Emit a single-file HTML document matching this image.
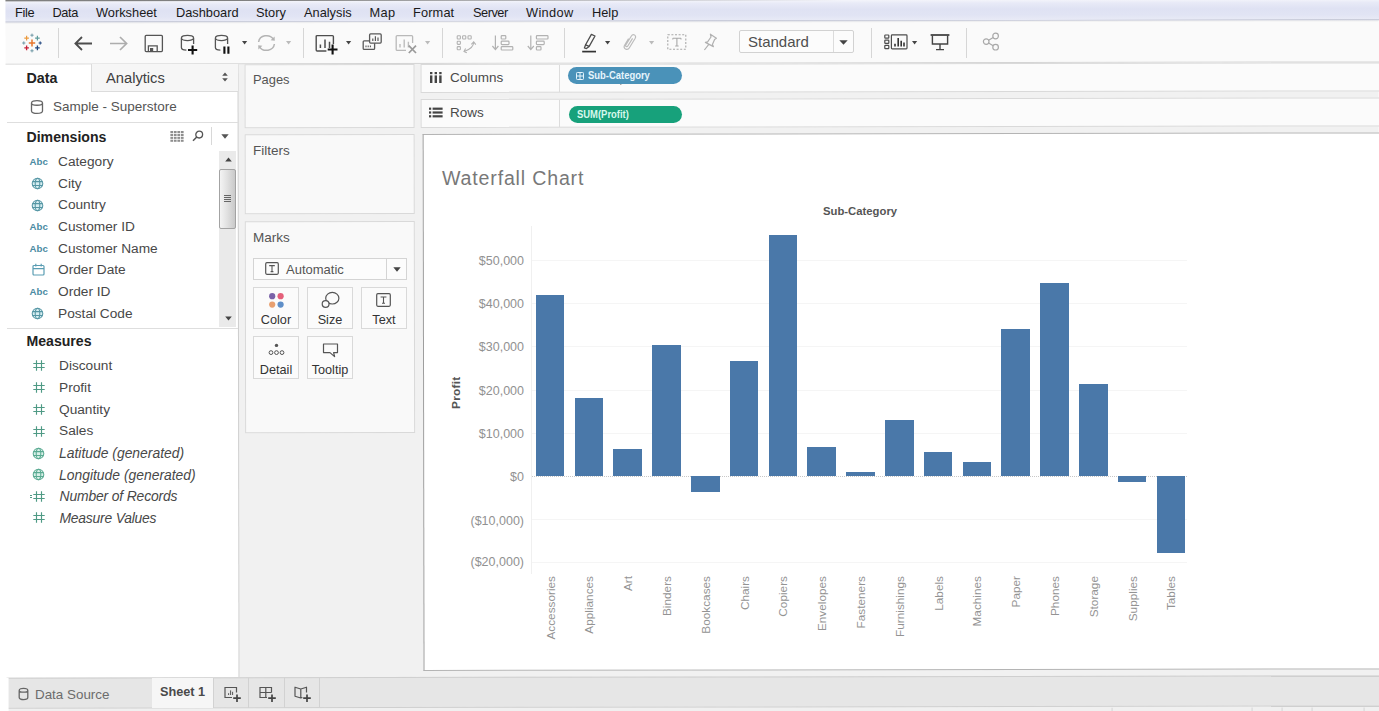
<!DOCTYPE html>
<html>
<head>
<meta charset="utf-8">
<title>Tableau - Waterfall Chart</title>
<style>
*{box-sizing:border-box;margin:0;padding:0}
html,body{width:1379px;height:711px;overflow:hidden;background:#f1f1f1;font-family:"Liberation Sans",sans-serif;color:#333}
.abs{position:absolute}
#wrap{position:relative;width:1379px;height:711px;overflow:hidden;background:#fff}
#app{position:absolute;left:0;top:0;width:1379px;height:711px;background:#f1f1f1;transform-origin:420px 355px;transform:rotate(-0.095deg)}
#content{position:absolute;left:0;top:0;width:1379px;height:711px}
/* menu bar */
#menubar{left:-5px;top:-4.7px;width:1390px;height:27px;background:linear-gradient(#7e7e7e 0,#808080 5.2px,#f2f3fa 6.2px,#e8eaf7 9px,#dfe2f3 15px,#e1e4f4 21px,#e8eaf6 25.5px,#c9ccda 26px,#d8dae4 27px)}
#menutext span{position:absolute;top:4.5px;font-size:12.8px;color:#1a1a1a;white-space:nowrap}
/* toolbar */
#toolbar{left:-5px;top:23px;width:1390px;height:41px;background:#fafafa;border-bottom:1px solid #d4d4d4}
.tsep{position:absolute;top:28px;width:1px;height:30px;background:#d6d6d6}
/* left panel */
#left{left:0;top:64px;width:239px;height:613px;background:#fff;border-right:1px solid #cdcdcd}
.card{position:absolute;background:#f9f9f9;border:1px solid #d9d9d9}
.lbl{position:absolute;font-size:13.5px;color:#555;white-space:nowrap}
.fld{position:absolute;left:58px;font-size:13.7px;color:#484848;white-space:nowrap;margin-top:1px}
.fld.i{font-style:italic;font-size:13.9px}
.hd{position:absolute;left:26.5px;font-size:14.1px;font-weight:bold;color:#222}
.abc{position:absolute;left:29.5px;font-size:9.7px;font-weight:bold;color:#4b8ba3;margin-top:0.3px}
.ytick{position:absolute;right:855px;font-size:12.5px;color:#919191;white-space:nowrap;text-align:right}
.xlab{position:absolute;margin-left:0.7px;font-size:11.8px;line-height:14px;width:14px;color:#939393;white-space:nowrap;writing-mode:vertical-rl;transform:rotate(180deg)}
.bar{position:absolute;background:#4a78a9;width:28.5px}
.mbtn{width:46px;height:42px;background:#fbfbfb;border:1px solid #d9d9d9}
.mlab{width:46px;text-align:center;font-size:12.7px;color:#333;margin-top:0.5px}
.grid{position:absolute;left:532px;width:655px;height:1px;background:#f5f5f5}
</style>
</head>
<body>
<div id="wrap">
<div id="app">
<div id="menubar" class="abs"></div>
<div id="toolbar" class="abs"></div>
<div id="left" class="abs"></div>
<div class="card" style="left:245px;top:64px;width:170px;height:64px"></div>
<div class="card" style="left:245px;top:134px;width:170px;height:80px"></div>
<div class="card" style="left:245px;top:221px;width:170px;height:212px"></div>
<div class="card" style="left:421px;top:64px;width:960px;height:29px;background:#fbfbfb"></div>
<div class="card" style="left:421px;top:99px;width:960px;height:29px;background:#fbfbfb"></div>
<div class="abs" style="left:422.6px;top:134px;width:960px;height:537px;background:#fff;border:1px solid #b4b4b4;border-left-color:#9e9e9e"></div>
<div class="abs" style="left:0;top:677px;width:1390px;height:31px;background:#e6e6e6;border-top:1px solid #cfcfcf"></div>
<div class="abs" style="left:0;top:707.4px;width:1390px;height:13px;background:#f0f0f0;border-top:1px solid #cfcfcf"></div>
<div class="abs" style="left:1111px;top:709px;width:1px;height:11px;background:#d4d4d4;box-shadow:140px 0 0 #d4d4d4,170px 0 0 #d4d4d4,200px 0 0 #d4d4d4,252px 0 0 #d4d4d4"></div>
<div class="abs" style="left:-5px;top:677px;width:13px;height:44px;background:#fff"></div>
<div class="abs" style="left:-5px;top:-5px;width:11px;height:725px;background:#fff"></div>
</div>
<div id="content">

<!-- MENU BAR -->
<div id="menutext">
<span style="left:15px;letter-spacing:-0.35px">File</span>
<span style="left:52.5px;letter-spacing:-0.4px">Data</span>
<span style="left:96px">Worksheet</span>
<span style="left:176px">Dashboard</span>
<span style="left:256px">Story</span>
<span style="left:304px">Analysis</span>
<span style="left:369.5px;letter-spacing:0.33px">Map</span>
<span style="left:413px;letter-spacing:0.13px">Format</span>
<span style="left:473px;letter-spacing:-0.5px">Server</span>
<span style="left:526px;letter-spacing:0.33px">Window</span>
<span style="left:592px">Help</span>
</div>

<!-- TOOLBAR -->
<div id="tseps">
<div class="tsep" style="left:58px"></div>
<div class="tsep" style="left:303px"></div>
<div class="tsep" style="left:442px"></div>
<div class="tsep" style="left:564px"></div>
<div class="tsep" style="left:871px"></div>
<div class="tsep" style="left:966px"></div>
</div>
<!-- TOOLBAR ICONS (app coords) -->
<!-- tableau logo -->
<svg class="abs" style="left:22px;top:33px" width="20" height="20" viewBox="0 0 20 20" fill="none" stroke-linecap="butt">
<path d="M10 6.6 V13.4 M6.8 10 H13.2" stroke="#e8762d" stroke-width="1.5"/>
<path d="M4.6 2.8 V7.4 M2.3 5.1 H6.9" stroke="#eb9a3e" stroke-width="1.2"/>
<path d="M15.4 2.8 V7.4 M13.1 5.1 H17.7" stroke="#5f9c9c" stroke-width="1.2"/>
<path d="M4.6 12.6 V17.2 M2.3 14.9 H6.9" stroke="#c72037" stroke-width="1.3"/>
<path d="M15.4 12.6 V17.2 M13.1 14.9 H17.7" stroke="#1f457e" stroke-width="1.3"/>
<path d="M10 0.6 V3.8 M8.4 2.2 H11.6" stroke="#7099a6" stroke-width="1"/>
<path d="M10 16.2 V19.4 M8.4 17.8 H11.6" stroke="#7099a6" stroke-width="1"/>
<path d="M1.8 8.4 V11.6 M0.2 10 H3.4" stroke="#7099a6" stroke-width="1"/>
<path d="M18.2 8.4 V11.6 M16.6 10 H19.8" stroke="#1f457e" stroke-width="1"/>
</svg>
<!-- back / forward -->
<svg class="abs" style="left:74px;top:36px" width="19" height="15" viewBox="0 0 19 15"><path d="M18 7.5 H1.6 M8 1 L1.4 7.5 L8 14" fill="none" stroke="#4d4d4d" stroke-width="1.8"/></svg>
<svg class="abs" style="left:109px;top:36px" width="19" height="15" viewBox="0 0 19 15"><path d="M1 7.5 H17.4 M11 1 L17.6 7.5 L11 14" fill="none" stroke="#adadad" stroke-width="1.7"/></svg>
<!-- save -->
<svg class="abs" style="left:144px;top:34px" width="20" height="19" viewBox="0 0 20 19"><rect x="1.2" y="1.4" width="17.2" height="16.2" rx="1" fill="none" stroke="#555" stroke-width="1.3"/><path d="M4.4 17.6 V11.8 H13.2 V17.6" fill="none" stroke="#555" stroke-width="1.3"/><rect x="6" y="14" width="3.2" height="3" fill="#555"/></svg>
<!-- add datasource -->
<svg class="abs" style="left:180px;top:34px" width="20" height="22" viewBox="0 0 20 22"><path d="M13.6 10 V4 C13.6 0.4 1.4 0.4 1.4 4 V13.4 C1.4 15.4 4 16 6.4 16.1 M1.4 4 C1.4 7.4 13.6 7.4 13.6 4" fill="none" stroke="#555" stroke-width="1.3"/><path d="M12.6 11.4 V20.6 M8 16 H17.2" stroke="#111" stroke-width="2.1" fill="none"/></svg>
<!-- pause datasource -->
<svg class="abs" style="left:214px;top:34px" width="20" height="22" viewBox="0 0 20 22"><path d="M13.6 10 V4 C13.6 0.4 1.4 0.4 1.4 4 V13.4 C1.4 15.4 4 16 6.4 16.1 M1.4 4 C1.4 7.4 13.6 7.4 13.6 4" fill="none" stroke="#555" stroke-width="1.3"/><path d="M10.4 12.4 V19.8 M14.4 12.4 V19.8" stroke="#111" stroke-width="2.1" fill="none"/></svg>
<svg class="abs dd" style="left:242.4px;top:41.3px" width="5.2" height="3.5" viewBox="0 0 6 4"><path d="M0 0 H6 L3 4 Z" fill="#444"/></svg>
<!-- refresh -->
<svg class="abs" style="left:256px;top:34px" width="21" height="18" viewBox="0 0 21 18"><path d="M2.6 8 A8 7.2 0 0 1 17.4 5.2 M18.4 10 A8 7.2 0 0 1 3.6 12.8" fill="none" stroke="#b4b4b4" stroke-width="1.5"/><path d="M14.6 6.2 L18.8 6.8 L18.6 2.4 Z M6.4 11.8 L2.2 11.2 L2.4 15.6 Z" fill="#b4b4b4"/></svg>
<svg class="abs dd" style="left:286.4px;top:41.3px" width="5.2" height="3.5" viewBox="0 0 6 4"><path d="M0 0 H6 L3 4 Z" fill="#bbb"/></svg>
<!-- new worksheet -->
<svg class="abs" style="left:315px;top:34px" width="24" height="22" viewBox="0 0 24 22"><path d="M18.4 10 V2.6 Q18.4 1.6 17.4 1.6 H2.2 Q1.2 1.6 1.2 2.6 V16 Q1.2 17 2.2 17 H11.4" fill="none" stroke="#4d4d4d" stroke-width="1.4"/><path d="M5.4 14 V10.4 M10 14 V5.4 M14.5 14 V7.8" stroke="#4d4d4d" stroke-width="1.5" fill="none"/><path d="M17.6 10.6 V20.4 M12.7 15.5 H22.5" stroke="#111" stroke-width="2.1" fill="none"/></svg>
<svg class="abs dd" style="left:346.4px;top:41.3px" width="5.2" height="3.5" viewBox="0 0 6 4"><path d="M0 0 H6 L3 4 Z" fill="#444"/></svg>
<!-- duplicate -->
<svg class="abs" style="left:362px;top:33px" width="21" height="18" viewBox="0 0 21 18"><path d="M7.4 7.8 H2.2 Q1.2 7.8 1.2 8.8 V15.4 Q1.2 16.4 2.2 16.4 H11.6 Q12.6 16.4 12.6 15.4 V10.2" fill="none" stroke="#5a5a5a" stroke-width="1.3"/><rect x="7.6" y="0.9" width="11.6" height="9.2" rx="1" fill="none" stroke="#5a5a5a" stroke-width="1.3"/><path d="M10.8 8 V5.6 M13.4 8 V3.2 M16 8 V4.6" stroke="#5a5a5a" stroke-width="1.2" fill="none"/><path d="M4 14.2 V12.4 M6.2 14.2 V12.4 M8.4 14.2 V12.4" stroke="#5a5a5a" stroke-width="1.1" fill="none"/></svg>
<!-- clear -->
<svg class="abs" style="left:395px;top:34px" width="24" height="22" viewBox="0 0 24 22"><path d="M17.6 9 V2.6 Q17.6 1.6 16.6 1.6 H2.2 Q1.2 1.6 1.2 2.6 V15.4 Q1.2 16.4 2.2 16.4 H11" fill="none" stroke="#b9b9b9" stroke-width="1.3"/><path d="M5 13.4 V10 M9.2 13.4 V5.4 M13.4 13.4 V7.8" stroke="#bdbdbd" stroke-width="1.4" fill="none"/><path d="M13.8 11.6 L21 19 M21 11.6 L13.8 19" stroke="#9a9a9a" stroke-width="1.7" fill="none"/></svg>
<svg class="abs dd" style="left:425.4px;top:41.3px" width="5.2" height="3.5" viewBox="0 0 6 4"><path d="M0 0 H6 L3 4 Z" fill="#bbb"/></svg>
<!-- swap -->
<svg class="abs" style="left:456px;top:34px" width="21" height="20" viewBox="0 0 21 20"><g fill="none" stroke="#b2b2b2" stroke-width="1.1"><rect x="1.2" y="1.8" width="3.2" height="3.2" rx="0.8"/><rect x="6.6" y="1.8" width="3.2" height="3.2" rx="0.8"/><rect x="12" y="1.8" width="3.2" height="3.2" rx="0.8"/><rect x="1.2" y="7.2" width="3.2" height="3.2" rx="0.8"/><rect x="1.2" y="12.6" width="3.2" height="3.2" rx="0.8"/><path d="M17.6 8.4 C17.6 13 13 15.6 8.6 17.2"/><path d="M15.4 10.4 L17.7 7.8 L19.8 10.6 M10.8 18.8 L8 17.4 L9.6 14.6"/></g></svg>
<!-- sort asc -->
<svg class="abs" style="left:491px;top:34px" width="24" height="18" viewBox="0 0 24 18"><g fill="none" stroke="#b2b2b2" stroke-width="1.2"><path d="M4.4 1.6 V15.4 M1.4 12 L4.4 15.6 L7.4 12"/><rect x="10.2" y="1.6" width="4.6" height="3.4" rx="0.8"/><rect x="10.2" y="7.2" width="7.8" height="3.4" rx="0.8"/><rect x="10.2" y="12.6" width="11.6" height="3.4" rx="0.8"/></g></svg>
<!-- sort desc -->
<svg class="abs" style="left:526px;top:34px" width="24" height="18" viewBox="0 0 24 18"><g fill="none" stroke="#b2b2b2" stroke-width="1.2"><path d="M4.8 1.6 V15.4 M1.8 12 L4.8 15.6 L7.8 12"/><rect x="10.4" y="1.6" width="11.6" height="3.4" rx="0.8"/><rect x="10.4" y="7.2" width="7.8" height="3.4" rx="0.8"/><rect x="10.4" y="12.6" width="4.6" height="3.4" rx="0.8"/></g></svg>
<!-- highlighter -->
<svg class="abs" style="left:581px;top:33px" width="16" height="20" viewBox="0 0 16 20"><path d="M10.4 1.4 L14 3 L8.2 13.4 L4.6 11.8 Z M4.6 11.8 L3.4 15 L5.4 15.6 L8.2 13.4" fill="none" stroke="#4d4d4d" stroke-width="1.3" stroke-linejoin="round"/><path d="M1.2 18.6 H15" stroke="#333" stroke-width="1.7"/></svg>
<svg class="abs dd" style="left:605.4px;top:41.3px" width="5.2" height="3.5" viewBox="0 0 6 4"><path d="M0 0 H6 L3 4 Z" fill="#444"/></svg>
<!-- paperclip -->
<svg class="abs" style="left:622px;top:33px" width="16" height="18" viewBox="0 0 16 18"><path d="M10.6 5.4 L5.8 13 C5 14.4 3 13.4 3.8 12 L9.4 3 C11 0.4 14.8 2.4 13.2 5.2 L7.4 14.8 C5.4 18 0.6 15.6 2.6 12.2 L6.6 5.6" fill="none" stroke="#bcbcbc" stroke-width="1.2"/></svg>
<svg class="abs dd" style="left:649.4px;top:41.3px" width="5.2" height="3.5" viewBox="0 0 6 4"><path d="M0 0 H6 L3 4 Z" fill="#bbb"/></svg>
<!-- dashed T -->
<svg class="abs" style="left:667px;top:34px" width="20" height="16" viewBox="0 0 20 16"><rect x="0.8" y="0.8" width="18" height="14.4" fill="none" stroke="#a8a8a8" stroke-width="1.1" stroke-dasharray="2 1.6"/><path d="M5.8 4.2 H14 M5.8 4.2 V5.6 M14 4.2 V5.6 M9.9 4.2 V12 M8.2 12 H11.6" stroke="#a8a8a8" stroke-width="1.1" fill="none"/></svg>
<!-- pin -->
<svg class="abs" style="left:702px;top:33px" width="16" height="18" viewBox="0 0 16 18"><path d="M8.4 1.2 L14.4 5.2 L12.6 6.4 L10.4 11.6 L11.4 13.6 L3.4 9.4 L5.6 8.8 L9 4 L8.4 1.2 Z M6.6 11.6 L2.4 17" fill="none" stroke="#b0b0b0" stroke-width="1.2" stroke-linejoin="round"/></svg>
<!-- Standard dropdown -->
<div class="abs" style="left:739px;top:30px;width:115px;height:23px;background:#fcfcfc;border:1px solid #d2d2d2;border-radius:2px"></div>
<div class="abs" style="left:833px;top:31px;width:1px;height:21px;background:#dcdcdc"></div>
<div class="abs" style="left:748px;top:33px;font-size:15px;color:#4f4f4f">Standard</div>
<svg class="abs" style="left:839px;top:40px" width="9" height="5" viewBox="0 0 9 5"><path d="M0.3 0.2 H8.7 L4.5 4.8 Z" fill="#444"/></svg>
<!-- show me -->
<svg class="abs" style="left:884px;top:34px" width="24" height="16" viewBox="0 0 24 16"><g fill="none" stroke="#4d4d4d" stroke-width="1.2"><rect x="0.8" y="1" width="4" height="3.2" rx="0.6"/><rect x="0.8" y="6.2" width="4" height="3.2" rx="0.6"/><rect x="0.8" y="11.4" width="4" height="3.2" rx="0.6"/><rect x="7.4" y="0.9" width="15.6" height="14" rx="0.8"/></g><path d="M11 12.6 V9.8 M14.2 12.6 V4 M17.2 12.6 V6.8 M20 12.6 V8.6" stroke="#333" stroke-width="1.6" fill="none"/></svg>
<svg class="abs dd" style="left:912.4px;top:41.3px" width="5.2" height="3.5" viewBox="0 0 6 4"><path d="M0 0 H6 L3 4 Z" fill="#444"/></svg>
<!-- presentation -->
<svg class="abs" style="left:930px;top:33px" width="20" height="18" viewBox="0 0 20 18"><path d="M0.6 2 H19.4" stroke="#444" stroke-width="1.8"/><path d="M2.4 2.4 V11 H17.6 V2.4 M10 11 V16.4 M6 16.6 H14" fill="none" stroke="#444" stroke-width="1.4"/></svg>
<!-- share -->
<svg class="abs" style="left:982px;top:32px" width="18" height="19" viewBox="0 0 18 19"><g fill="none" stroke="#a9a9a9" stroke-width="1.2"><circle cx="4.2" cy="9.6" r="2.8"/><circle cx="13.6" cy="4" r="2.8"/><circle cx="13.6" cy="15.2" r="2.8"/><path d="M6.6 8.2 L11.2 5.4 M6.6 11 L11.2 13.8"/></g></svg>


<!-- LEFT PANEL -->

<!-- tabs -->
<div class="abs" style="left:91px;top:64px;width:147px;height:28px;background:#f6f6f6;border-left:1px solid #dcdcdc;border-bottom:1px solid #dcdcdc"></div>
<div class="abs" style="left:26.5px;top:70px;font-size:14.3px;font-weight:bold;color:#222">Data</div>
<div class="abs" style="left:106px;top:70px;font-size:14.7px;color:#404040">Analytics</div>
<svg class="abs" style="left:221px;top:72px" width="8" height="10" viewBox="0 0 8 10"><path d="M4 0.5 L6.8 3.8 H1.2 Z M4 9.5 L6.8 6.2 H1.2 Z" fill="#555"/></svg>
<!-- datasource -->
<svg class="abs" style="left:30px;top:99px" width="14" height="16" viewBox="0 0 14 16"><path d="M1.5 4 C1.5 0.8 12.5 0.8 12.5 4 V12 C12.5 15.2 1.5 15.2 1.5 12 Z M1.5 4 C1.5 7 12.5 7 12.5 4" fill="none" stroke="#666" stroke-width="1.3"/></svg>
<div class="abs" style="left:53px;top:99px;font-size:13.5px;color:#555">Sample - Superstore</div>
<div class="abs" style="left:7px;top:122px;width:231px;height:1px;background:#dedede"></div>
<!-- dimensions header -->
<div class="hd" style="top:129px">Dimensions</div>
<svg class="abs" style="left:170px;top:131px" width="14" height="11" viewBox="0 0 14 11"><g fill="#8e8e8e"><rect x="0.4" y="0.0" width="2.7" height="2.1"/><rect x="0.4" y="2.9" width="2.7" height="2.1"/><rect x="0.4" y="5.8" width="2.7" height="2.1"/><rect x="0.4" y="8.7" width="2.7" height="2.1"/><rect x="3.9" y="0.0" width="2.7" height="2.1"/><rect x="3.9" y="2.9" width="2.7" height="2.1"/><rect x="3.9" y="5.8" width="2.7" height="2.1"/><rect x="3.9" y="8.7" width="2.7" height="2.1"/><rect x="7.4" y="0.0" width="2.7" height="2.1"/><rect x="7.4" y="2.9" width="2.7" height="2.1"/><rect x="7.4" y="5.8" width="2.7" height="2.1"/><rect x="7.4" y="8.7" width="2.7" height="2.1"/><rect x="10.9" y="0.0" width="2.7" height="2.1"/><rect x="10.9" y="2.9" width="2.7" height="2.1"/><rect x="10.9" y="5.8" width="2.7" height="2.1"/><rect x="10.9" y="8.7" width="2.7" height="2.1"/></g></svg>
<svg class="abs" style="left:192px;top:130px" width="12" height="12" viewBox="0 0 12 12"><circle cx="7.2" cy="4.6" r="3.4" fill="none" stroke="#555" stroke-width="1.3"/><path d="M4.8 7 L1 10.8" stroke="#555" stroke-width="1.5"/></svg>
<div class="abs" style="left:211px;top:127px;width:1px;height:18px;background:#d8d8d8"></div>
<svg class="abs" style="left:221px;top:134px" width="8" height="5" viewBox="0 0 8 5"><path d="M0.3 0.3 H7.7 L4 4.7 Z" fill="#555"/></svg>
<!-- dimension fields -->
<div class="abc" style="top:156px">Abc</div><div class="fld" style="top:153px">Category</div>
<div class="fld" style="top:175px">City</div>
<div class="fld" style="top:196px">Country</div>
<div class="abc" style="top:221px">Abc</div><div class="fld" style="top:218px">Customer ID</div>
<div class="abc" style="top:243px">Abc</div><div class="fld" style="top:240px">Customer Name</div>
<div class="fld" style="top:261px">Order Date</div>
<div class="abc" style="top:286px">Abc</div><div class="fld" style="top:283px">Order ID</div>
<div class="fld" style="top:305px">Postal Code</div>
<!-- globe icons (blue) -->
<svg class="abs" style="left:31.3px;top:177.0px" width="13" height="13" viewBox="0 0 13 13"><g fill="none" stroke="#5596a4" stroke-width="1.05"><circle cx="6.5" cy="6.5" r="5.3" fill="#d6edf1"/><ellipse cx="6.5" cy="6.5" rx="2.3" ry="5.3"/><path d="M1.6 4.6 H11.4 M1.6 8.4 H11.4"/></g></svg>
<svg class="abs" style="left:31.3px;top:198.6px" width="13" height="13" viewBox="0 0 13 13"><g fill="none" stroke="#5596a4" stroke-width="1.05"><circle cx="6.5" cy="6.5" r="5.3" fill="#d6edf1"/><ellipse cx="6.5" cy="6.5" rx="2.3" ry="5.3"/><path d="M1.6 4.6 H11.4 M1.6 8.4 H11.4"/></g></svg>
<svg class="abs" style="left:31.3px;top:306.6px" width="13" height="13" viewBox="0 0 13 13"><g fill="none" stroke="#5596a4" stroke-width="1.05"><circle cx="6.5" cy="6.5" r="5.3" fill="#d6edf1"/><ellipse cx="6.5" cy="6.5" rx="2.3" ry="5.3"/><path d="M1.6 4.6 H11.4 M1.6 8.4 H11.4"/></g></svg>
<!-- calendar icon -->
<svg class="abs" style="left:32px;top:263px" width="13" height="13" viewBox="0 0 13 13"><g fill="none" stroke="#5a9db3" stroke-width="1.2"><rect x="1" y="2.5" width="11" height="9.5" rx="1"/><path d="M1 5.6 H12 M3.8 0.8 V3.4 M9.2 0.8 V3.4"/></g></svg>
<!-- scrollbar -->
<div class="abs" style="left:219px;top:151px;width:17px;height:176px;background:#eaeaea"></div>
<div class="abs" style="left:219px;top:169px;width:17px;height:60px;background:linear-gradient(90deg,#f4f4f4,#e2e2e2 45%,#c9c9c9);border:1px solid #a3a3a3;border-radius:2px"></div>
<div class="abs" style="left:224px;top:195px;width:7px;height:1px;background:#666;box-shadow:0 2px 0 #666,0 4px 0 #666,0 6px 0 #666"></div>
<svg class="abs" style="left:225px;top:157px" width="7" height="5" viewBox="0 0 7 5"><path d="M0.2 4.6 H6.8 L3.5 0.6 Z" fill="#444"/></svg>
<svg class="abs" style="left:225px;top:316px" width="7" height="5" viewBox="0 0 7 5"><path d="M0.2 0.4 H6.8 L3.5 4.4 Z" fill="#444"/></svg>
<div class="abs" style="left:7px;top:328px;width:231px;height:1px;background:#dedede"></div>
<!-- measures -->
<div class="hd" style="top:333px">Measures</div>
<div class="fld" style="top:357px;left:59px">Discount</div>
<div class="fld" style="top:379px;left:59px">Profit</div>
<div class="fld" style="top:401px;left:59px">Quantity</div>
<div class="fld" style="top:422px;left:59px">Sales</div>
<div class="fld i" style="top:444px;left:59px">Latitude (generated)</div>
<div class="fld i" style="top:466px;left:59px">Longitude (generated)</div>
<div class="fld i" style="top:487px;left:59.5px;letter-spacing:-0.15px">Number of Records</div>
<div class="fld i" style="top:509px;left:59.5px;letter-spacing:-0.22px">Measure Values</div>
<svg class="abs" style="left:33px;top:360px" width="12" height="11" viewBox="0 0 12 11"><path d="M3.5 0.3 V10.7 M8.5 0.3 V10.7 M0.3 3.5 H11.7 M0.3 7.5 H11.7" fill="none" stroke="#4f9a85" stroke-width="1.15"/></svg>
<svg class="abs" style="left:33px;top:382px" width="12" height="11" viewBox="0 0 12 11"><path d="M3.5 0.3 V10.7 M8.5 0.3 V10.7 M0.3 3.5 H11.7 M0.3 7.5 H11.7" fill="none" stroke="#4f9a85" stroke-width="1.15"/></svg>
<svg class="abs" style="left:33px;top:404px" width="12" height="11" viewBox="0 0 12 11"><path d="M3.5 0.3 V10.7 M8.5 0.3 V10.7 M0.3 3.5 H11.7 M0.3 7.5 H11.7" fill="none" stroke="#4f9a85" stroke-width="1.15"/></svg>
<svg class="abs" style="left:33px;top:426px" width="12" height="11" viewBox="0 0 12 11"><path d="M3.5 0.3 V10.7 M8.5 0.3 V10.7 M0.3 3.5 H11.7 M0.3 7.5 H11.7" fill="none" stroke="#4f9a85" stroke-width="1.15"/></svg>
<svg class="abs" style="left:33px;top:512px" width="12" height="11" viewBox="0 0 12 11"><path d="M3.5 0.3 V10.7 M8.5 0.3 V10.7 M0.3 3.5 H11.7 M0.3 7.5 H11.7" fill="none" stroke="#4f9a85" stroke-width="1.15"/></svg>
<svg class="abs" style="left:33px;top:491px" width="12" height="11" viewBox="0 0 12 11"><path d="M3.5 0.3 V10.7 M8.5 0.3 V10.7 M0.3 3.5 H11.7 M0.3 7.5 H11.7" fill="none" stroke="#4f9a85" stroke-width="1.15"/></svg>
<div class="abs" style="left:29.5px;top:495px;width:2.5px;height:1px;background:#4f9a85;box-shadow:0 2px 0 #4f9a85"></div>
<svg class="abs" style="left:32.1px;top:446.6px" width="13" height="13" viewBox="0 0 13 13"><g fill="none" stroke="#5aaa92" stroke-width="1.05"><circle cx="6.5" cy="6.5" r="5.3" fill="#d9f0e8"/><ellipse cx="6.5" cy="6.5" rx="2.3" ry="5.3"/><path d="M1.6 4.6 H11.4 M1.6 8.4 H11.4"/></g></svg>
<svg class="abs" style="left:32.1px;top:468.3px" width="13" height="13" viewBox="0 0 13 13"><g fill="none" stroke="#5aaa92" stroke-width="1.05"><circle cx="6.5" cy="6.5" r="5.3" fill="#d9f0e8"/><ellipse cx="6.5" cy="6.5" rx="2.3" ry="5.3"/><path d="M1.6 4.6 H11.4 M1.6 8.4 H11.4"/></g></svg>


<!-- MIDDLE CARDS -->

<div class="lbl" style="left:253px;top:72px;font-size:12.9px">Pages</div>

<div class="lbl" style="left:253px;top:142.6px">Filters</div>

<div class="lbl" style="left:253px;top:230px">Marks</div>
<div class="abs" style="left:253px;top:258px;width:154px;height:22px;background:#fcfcfc;border:1px solid #d4d4d4"></div>
<div class="abs" style="left:386px;top:259px;width:1px;height:20px;background:#d4d4d4"></div>
<svg class="abs" style="left:393px;top:267px" width="8" height="5" viewBox="0 0 8 5"><path d="M0.3 0.3 H7.7 L4 4.7 Z" fill="#444"/></svg>
<svg class="abs" style="left:265px;top:262px" width="14" height="13" viewBox="0 0 14 13"><rect x="0.7" y="0.7" width="12.6" height="11.6" rx="1.2" fill="none" stroke="#555" stroke-width="1.2"/><path d="M4.2 3.6 H9.8 M7 3.6 V9.6 M5.6 9.6 H8.4" stroke="#555" stroke-width="1.1" fill="none"/></svg>
<div class="abs" style="left:286px;top:262px;font-size:13px;color:#555">Automatic</div>
<!-- buttons -->
<div class="abs mbtn" style="left:253px;top:287px"></div>
<div class="abs mbtn" style="left:307px;top:287px"></div>
<div class="abs mbtn" style="left:361px;top:287px"></div>
<div class="abs mbtn" style="left:253px;top:336px;height:43px"></div>
<div class="abs mbtn" style="left:307px;top:336px;height:43px"></div>
<div class="abs mlab" style="left:253px;top:312px">Color</div>
<div class="abs mlab" style="left:307px;top:312px">Size</div>
<div class="abs mlab" style="left:361px;top:312px">Text</div>
<div class="abs mlab" style="left:253px;top:362px">Detail</div>
<div class="abs mlab" style="left:307px;top:362px">Tooltip</div>
<!-- color dots -->
<svg class="abs" style="left:268px;top:292px" width="17" height="17" viewBox="0 0 17 17"><circle cx="4.2" cy="4.2" r="3.1" fill="#7a62a8"/><circle cx="12.6" cy="4.2" r="3.1" fill="#e4607a"/><circle cx="4.2" cy="12.6" r="3.1" fill="#e8a070"/><circle cx="12.6" cy="12.6" r="3.1" fill="#5f8fc8"/></svg>
<!-- size -->
<svg class="abs" style="left:321px;top:291px" width="19" height="18" viewBox="0 0 19 18"><ellipse cx="11.3" cy="7.2" rx="6.6" ry="5.8" fill="#fbfbfb" stroke="#555" stroke-width="1.2"/><circle cx="4.6" cy="13" r="3.4" fill="#fbfbfb" stroke="#555" stroke-width="1.2"/></svg>
<!-- text -->
<svg class="abs" style="left:376px;top:293px" width="15" height="14" viewBox="0 0 15 14"><rect x="0.7" y="0.7" width="13.6" height="12.6" rx="1.2" fill="none" stroke="#555" stroke-width="1.2"/><path d="M4.6 4 H10.4 M7.5 4 V10.2 M6 10.2 H9" stroke="#555" stroke-width="1.1" fill="none"/></svg>
<!-- detail -->
<svg class="abs" style="left:268px;top:343px" width="17" height="13" viewBox="0 0 17 13"><circle cx="8.5" cy="2.4" r="1.7" fill="#555"/><circle cx="3" cy="9.6" r="1.9" fill="none" stroke="#555" stroke-width="1"/><circle cx="8.5" cy="9.6" r="1.9" fill="none" stroke="#555" stroke-width="1"/><circle cx="14" cy="9.6" r="1.9" fill="none" stroke="#555" stroke-width="1"/></svg>
<!-- tooltip -->
<svg class="abs" style="left:322px;top:343px" width="17" height="15" viewBox="0 0 17 15"><path d="M1.5 1 H15.5 V9.6 H11.6 L12.6 13.6 L8 9.6 H1.5 Z" fill="none" stroke="#555" stroke-width="1.2" stroke-linejoin="round"/></svg>


<!-- SHELVES -->


<div class="abs" style="left:559px;top:65px;width:1px;height:27px;background:#dcdcdc"></div>
<div class="abs" style="left:559px;top:100px;width:1px;height:27px;background:#dcdcdc"></div>
<svg class="abs" style="left:620px;top:80px" width="5" height="6" viewBox="0 0 5 6"><path d="M0.5 0 L0.5 5 L2 3.8 L4.2 3.6 Z" fill="#333"/></svg>
<!-- columns icon -->
<svg class="abs" style="left:429px;top:72px" width="14" height="11" viewBox="0 0 14 11"><g fill="#444"><rect x="1" y="0" width="2.4" height="2.2"/><rect x="1" y="3.4" width="2.4" height="7.6"/><rect x="5.6" y="0" width="2.4" height="2.2"/><rect x="5.6" y="3.4" width="2.4" height="7.6"/><rect x="10.2" y="0" width="2.4" height="2.2"/><rect x="10.2" y="3.4" width="2.4" height="7.6"/></g></svg>
<div class="abs" style="left:450px;top:70px;font-size:13.5px;color:#4a4a4a">Columns</div>
<!-- rows icon -->
<svg class="abs" style="left:429px;top:107px" width="14" height="11" viewBox="0 0 14 11"><g fill="#444"><rect x="0" y="0.6" width="2.2" height="2.2"/><rect x="3.6" y="0.6" width="10" height="2.2"/><rect x="0" y="4.4" width="2.2" height="2.2"/><rect x="3.6" y="4.4" width="10" height="2.2"/><rect x="0" y="8.2" width="2.2" height="2.2"/><rect x="3.6" y="8.2" width="10" height="2.2"/></g></svg>
<div class="abs" style="left:450px;top:105px;font-size:13.5px;color:#4a4a4a">Rows</div>
<!-- pills -->
<div class="abs" style="left:567.6px;top:67.3px;width:114.6px;height:17px;border-radius:8.5px;background:#4a92b9"></div>
<svg class="abs" style="left:576px;top:72px" width="8" height="8" viewBox="0 0 8 8"><rect x="0.5" y="0.5" width="7" height="7" rx="0.8" fill="none" stroke="#e3f4fc" stroke-width="1"/><path d="M0.5 4 H7.5 M4 0.5 V7.5" stroke="#e3f4fc" stroke-width="1"/></svg>
<div class="abs" style="left:588px;top:69px;font-size:11.5px;font-weight:bold;color:#e6f5fc;transform-origin:0 50%;transform:scaleX(0.82);white-space:nowrap">Sub-Category</div>
<div class="abs" style="left:569px;top:106px;width:113.2px;height:17.2px;border-radius:8.6px;background:#17a17b"></div>
<div class="abs" style="left:577px;top:108px;font-size:11.5px;font-weight:bold;color:#d6f8ec;transform-origin:0 50%;transform:scaleX(0.82);white-space:nowrap">SUM(Profit)</div>


<!-- VIZ -->

<div class="abs" style="left:442px;top:166.6px;font-size:19.6px;letter-spacing:0.82px;color:#787878;white-space:nowrap">Waterfall Chart</div>
<div class="abs" style="left:823px;top:204.5px;font-size:11.3px;font-weight:bold;color:#555;white-space:nowrap">Sub-Category</div>
<div class="grid" style="top:562.2px"></div>
<div class="grid" style="top:519.0px"></div>
<div class="grid" style="top:432.8px"></div>
<div class="grid" style="top:389.6px"></div>
<div class="grid" style="top:346.4px"></div>
<div class="grid" style="top:303.3px"></div>
<div class="grid" style="top:260.1px"></div>
<div class="abs" style="left:532px;top:475.9px;width:655px;height:0;border-top:1px dotted #c8c8c8"></div>
<div class="abs" style="left:531px;top:226px;width:1px;height:348px;background:#f0f0f0"></div>
<div class="bar" style="left:535.8px;top:294.9px;height:181.5px"></div>
<div class="bar" style="left:574.6px;top:398.0px;height:78.4px"></div>
<div class="bar" style="left:613.4px;top:448.5px;height:27.9px"></div>
<div class="bar" style="left:652.2px;top:345.3px;height:131.1px"></div>
<div class="bar" style="left:691.0px;top:476.4px;height:15.5px"></div>
<div class="bar" style="left:729.8px;top:360.7px;height:115.7px"></div>
<div class="bar" style="left:768.6px;top:234.6px;height:241.8px"></div>
<div class="bar" style="left:807.4px;top:446.6px;height:29.8px"></div>
<div class="bar" style="left:846.2px;top:472.4px;height:4.0px"></div>
<div class="bar" style="left:885.0px;top:420.3px;height:56.1px"></div>
<div class="bar" style="left:923.8px;top:452.4px;height:24.0px"></div>
<div class="bar" style="left:962.6px;top:462.1px;height:14.3px"></div>
<div class="bar" style="left:1001.4px;top:328.8px;height:147.6px"></div>
<div class="bar" style="left:1040.2px;top:283.2px;height:193.2px"></div>
<div class="bar" style="left:1079.0px;top:384.0px;height:92.4px"></div>
<div class="bar" style="left:1117.8px;top:476.4px;height:5.5px"></div>
<div class="bar" style="left:1156.6px;top:476.4px;height:76.8px"></div>
<div class="ytick" style="top:253.9px">$50,000</div>
<div class="ytick" style="top:297.2px">$40,000</div>
<div class="ytick" style="top:340.4px">$30,000</div>
<div class="ytick" style="top:383.7px">$20,000</div>
<div class="ytick" style="top:426.9px">$10,000</div>
<div class="ytick" style="top:470.2px">$0</div>
<div class="ytick" style="top:513.5px">($10,000)</div>
<div class="ytick" style="top:554.5px">($20,000)</div>
<div class="abs" style="left:449px;top:409px;font-size:11.8px;letter-spacing:0.3px;font-weight:bold;color:#555;white-space:nowrap;transform-origin:0 0;transform:rotate(-90deg)">Profit</div>
<div class="xlab" style="left:543.0px;top:576px">Accessories</div>
<div class="xlab" style="left:581.8px;top:576px">Appliances</div>
<div class="xlab" style="left:620.6px;top:576px">Art</div>
<div class="xlab" style="left:659.4px;top:576px">Binders</div>
<div class="xlab" style="left:698.2px;top:576px">Bookcases</div>
<div class="xlab" style="left:737.0px;top:576px">Chairs</div>
<div class="xlab" style="left:775.8px;top:576px">Copiers</div>
<div class="xlab" style="left:814.6px;top:576px">Envelopes</div>
<div class="xlab" style="left:853.4px;top:576px">Fasteners</div>
<div class="xlab" style="left:892.2px;top:576px">Furnishings</div>
<div class="xlab" style="left:931.0px;top:576px">Labels</div>
<div class="xlab" style="left:969.8px;top:576px">Machines</div>
<div class="xlab" style="left:1008.6px;top:576px">Paper</div>
<div class="xlab" style="left:1047.4px;top:576px">Phones</div>
<div class="xlab" style="left:1086.2px;top:576px">Storage</div>
<div class="xlab" style="left:1125.0px;top:576px">Supplies</div>
<div class="xlab" style="left:1163.8px;top:576px">Tables</div>

<!-- BOTTOM TABS -->




<div class="abs" style="left:152px;top:678px;width:61px;height:30px;background:#f6f6f6"></div>
<div class="abs" style="left:213px;top:678px;width:1px;height:30px;background:#d2d2d2"></div>
<div class="abs" style="left:248px;top:678px;width:1px;height:30px;background:#d2d2d2"></div>
<div class="abs" style="left:284px;top:678px;width:1px;height:30px;background:#d2d2d2"></div>
<div class="abs" style="left:319px;top:678px;width:1px;height:30px;background:#d2d2d2"></div>
<svg class="abs" style="left:17.8px;top:687px" width="11" height="14" viewBox="0 0 11 14"><path d="M1.2 3.4 C1.2 0.6 9.8 0.6 9.8 3.4 V10.6 C9.8 13.4 1.2 13.4 1.2 10.6 Z M1.2 3.4 C1.2 5.8 9.8 5.8 9.8 3.4" fill="none" stroke="#666" stroke-width="1.3"/></svg>
<div class="abs" style="left:35px;top:686.5px;font-size:13.4px;color:#6c6c6c;white-space:nowrap">Data Source</div>
<div class="abs" style="left:160px;top:685px;font-size:12.7px;font-weight:bold;color:#4a4a4a;white-space:nowrap">Sheet 1</div>
<!-- new worksheet -->
<svg class="abs" style="left:224px;top:686px" width="18" height="17" viewBox="0 0 18 17"><path d="M12.5 6.5 V1.5 H1 V11.5 H8" fill="none" stroke="#555" stroke-width="1.2"/><path d="M4.6 9 V7.2 M6.6 9 V4.4 M8.6 9 V5.8" stroke="#555" stroke-width="1" fill="none"/><path d="M13 8.4 V16 M9.2 12.2 H16.8" stroke="#444" stroke-width="1.7" fill="none"/></svg>
<!-- new dashboard -->
<svg class="abs" style="left:259px;top:686px" width="18" height="17" viewBox="0 0 18 17"><path d="M12.5 6.5 V1.5 H1 V11.5 H8 M1 6.5 H12.5 M6.8 1.5 V11.5" fill="none" stroke="#555" stroke-width="1.2"/><path d="M13 8.4 V16 M9.2 12.2 H16.8" stroke="#444" stroke-width="1.7" fill="none"/></svg>
<!-- new story -->
<svg class="abs" style="left:294px;top:686px" width="18" height="17" viewBox="0 0 18 17"><path d="M12.5 6.5 V1.2 L6.8 3 L1 1.2 V10.2 L6.8 12 L8.4 11.5 M6.8 3 V12" fill="none" stroke="#555" stroke-width="1.2" stroke-linejoin="round"/><path d="M13 8.4 V16 M9.2 12.2 H16.8" stroke="#444" stroke-width="1.7" fill="none"/></svg>



</div>
</div>
</body>
</html>
